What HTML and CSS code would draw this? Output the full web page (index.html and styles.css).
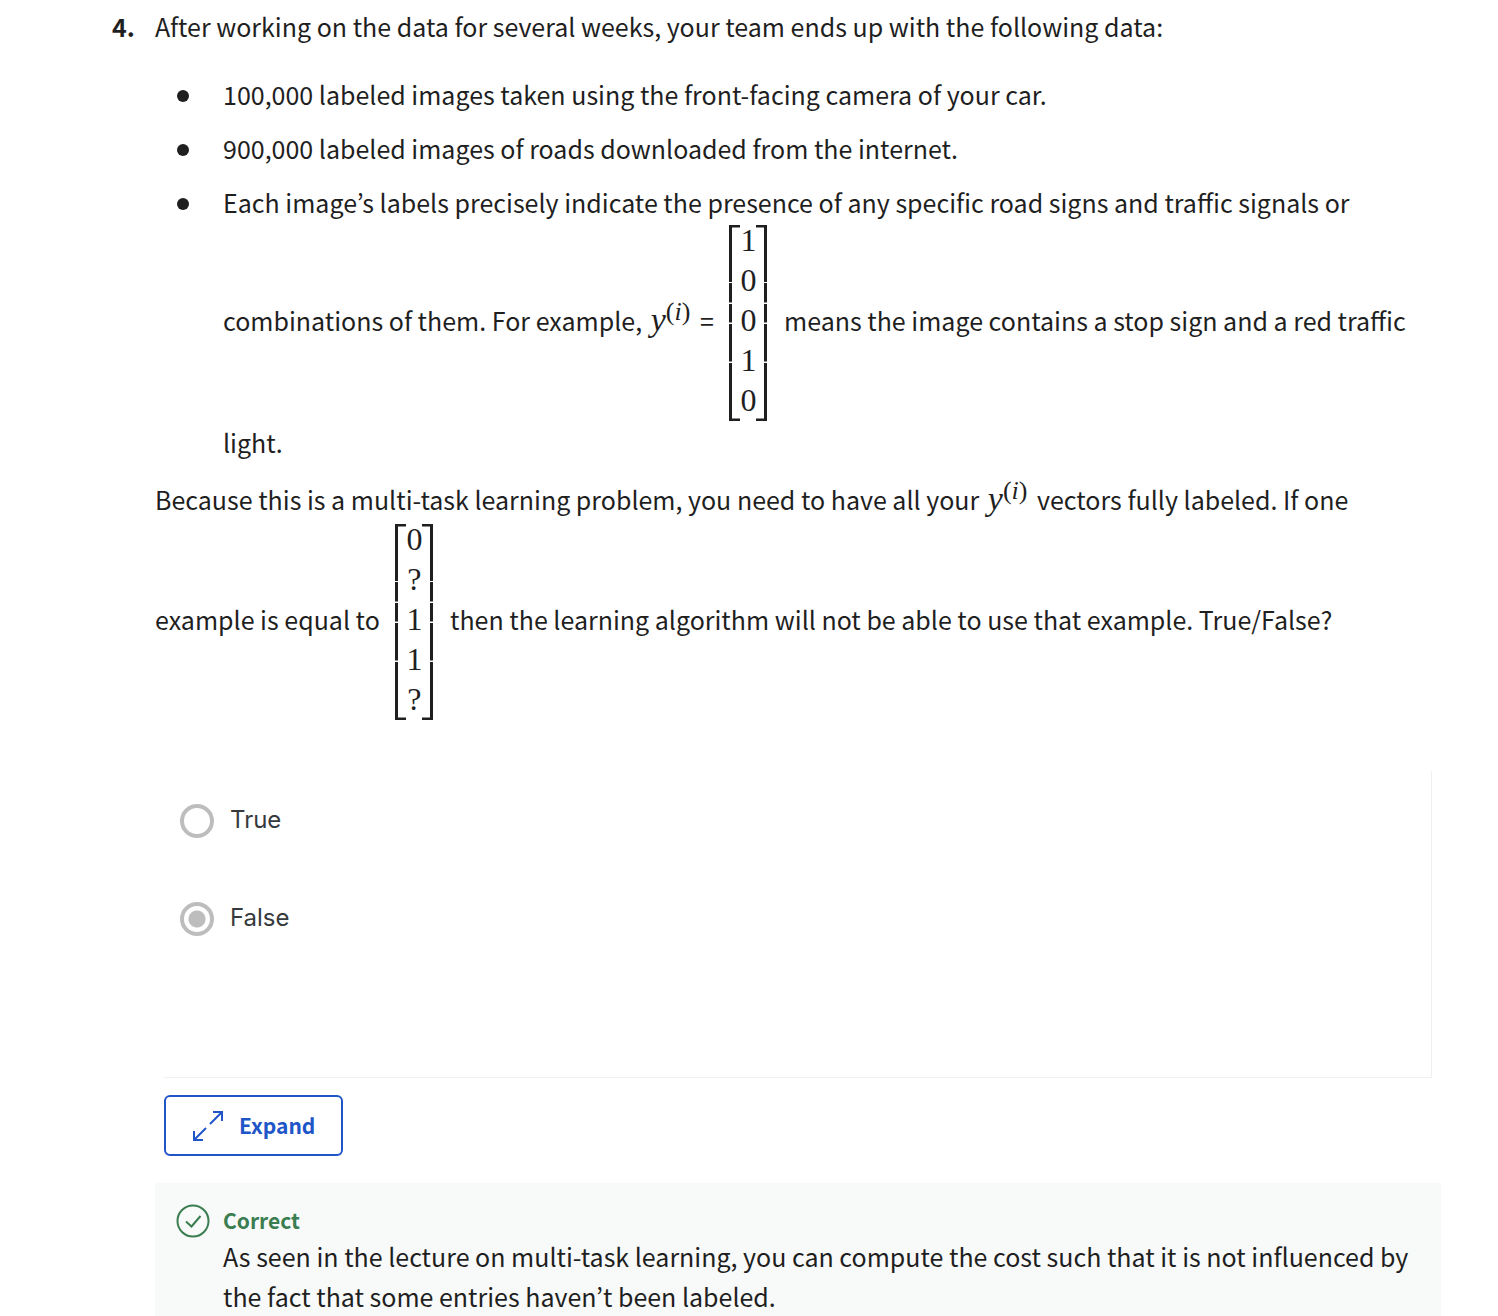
FILE: index.html
```html
<!DOCTYPE html>
<html lang="en">
<head>
<meta charset="utf-8">
<title>Quiz question 4</title>
<link rel="stylesheet" href="styles.css">
</head>
<body>
<main class="question">
  <div class="number">4.</div>
  <div class="content">
    <p class="intro">After working on the data for several weeks, your team ends up with the following data:</p>
    <ul class="facts">
      <li>100,000 labeled images taken using the front-facing camera of your car.</li>
      <li>900,000 labeled images of roads downloaded from the internet.</li>
      <li>Each image’s labels precisely indicate the presence of any specific road signs and traffic signals or combinations of them. For example, <span class="math">y<sup>(<i>i</i>)</sup></span> = <span class="matrix"><svg class="bracket" viewBox="0 0 11 196" aria-hidden="true"><path d="M11 1H1.5V57M1.5 58V77.5M1.5 79V97.5M1.5 99V136.5M1.5 138V195H11"/></svg><span class="column"><span>1</span><span>0</span><span>0</span><span>1</span><span>0</span></span><svg class="bracket" viewBox="0 0 11 196" aria-hidden="true"><path d="M0 1H9.5V57M9.5 58V77.5M9.5 79V97.5M9.5 99V136.5M9.5 138V195H0"/></svg></span> means the image contains a stop sign and a red traffic light.</li>
    </ul>
    <p class="prompt">Because this is a multi-task learning problem, you need to have all your <span class="math">y<sup>(<i>i</i>)</sup></span> vectors fully labeled. If one example is equal to <span class="matrix"><svg class="bracket" viewBox="0 0 11 196" aria-hidden="true"><path d="M11 1H1.5V57M1.5 58V77.5M1.5 79V97.5M1.5 99V136.5M1.5 138V195H11"/></svg><span class="column"><span>0</span><span>?</span><span>1</span><span>1</span><span>?</span></span><svg class="bracket" viewBox="0 0 11 196" aria-hidden="true"><path d="M0 1H9.5V57M9.5 58V77.5M9.5 79V97.5M9.5 99V136.5M9.5 138V195H0"/></svg></span> then the learning algorithm will not be able to use that example. True/False?</p>
    <div class="options" role="radiogroup" aria-label="Answer">
      <label class="option"><input type="radio" name="answer" value="true"><span>True</span></label>
      <label class="option"><input type="radio" name="answer" value="false" checked><span>False</span></label>
    </div>
    <button class="expand" type="button">
      <svg class="expand-icon" viewBox="0 0 30 30" aria-hidden="true"><path d="M17 13L29 1M20 1H29V10M13 17L1 29M1 20V29H10"/></svg>
      <span>Expand</span>
    </button>
    <section class="feedback">
      <svg class="check-icon" viewBox="0 0 34 34" aria-hidden="true"><circle cx="17" cy="17" r="15.5"/><path d="M10 17.5L15.5 22.5L24.5 12"/></svg>
      <div>
        <h2>Correct</h2>
        <p>As seen in the lecture on multi-task learning, you can compute the cost such that it is not influenced by the fact that some entries haven’t been labeled.</p>
      </div>
    </section>
  </div>
</main>
</body>
</html>
```
FILE: styles.css
```css
* { box-sizing: border-box; }
body {
  margin: 0;
  background: #fff;
  color: #1f1f1f;
  font: 25px/40px "Noto Sans CJK KR", "Noto Sans", sans-serif;
}
p, ul, h2 { margin: 0; }
.question { display: flex; padding: 6px 57px 0 112px; }
.number { flex: 0 0 43px; font-weight: 700; }
.content { flex: 1; min-width: 0; }
.facts {
  display: flex;
  flex-direction: column;
  gap: 14px;
  margin: 28px 0 15px;
  padding: 0;
  list-style: none;
}
.facts li { position: relative; padding-left: 68px; }
.facts li::before {
  content: "";
  position: absolute;
  left: 22px;
  top: 16px;
  width: 12px;
  height: 12px;
  border-radius: 50%;
  background: #1f1f1f;
}
.prompt { line-height: 44px; }
.math { margin: 0 4px 0 3px; font: italic 34px/0 "Liberation Serif", serif; }
.math sup { font-size: 26px; font-style: normal; line-height: 0; vertical-align: 11px; }
.matrix {
  display: inline-flex;
  align-items: center;
  height: 200px;
  margin: 0 11px 0 10px;
  padding-top: 2px;
  vertical-align: -90px;
  font: 32px/40px "Liberation Serif", serif;
}
.bracket { width: 11px; height: 196px; fill: none; stroke: #1f1f1f; stroke-width: 3; }
.column { display: flex; flex-direction: column; width: 16px; padding-bottom: 6px; text-align: center; }
.options {
  display: flex;
  flex-direction: column;
  gap: 58px;
  height: 307px;
  margin: 50px 9px 0;
  padding: 30px 16px;
  border: solid #f0f0f0;
  border-width: 0 1px 1px 0;
}
.option {
  display: flex;
  align-items: center;
  gap: 16px;
  color: #373a3c;
  font: 24px/38px Inter, sans-serif;
}
.option span { padding-bottom: 2px; }
.option input {
  appearance: none;
  width: 34px;
  height: 34px;
  margin: 0;
  border: 4px solid #bdbdbd;
  border-radius: 50%;
}
.option input:checked { background: radial-gradient(circle, #bdbdbd 8px, #fff 9px); }
.expand {
  display: flex;
  align-items: center;
  gap: 16px;
  height: 61px;
  margin: 17px 9px 27px;
  padding: 0 26px 0 27px;
  border: 2px solid #2055c8;
  border-radius: 6px;
  background: #fff;
  color: #2055c8;
  font: 700 21px/38px "Noto Sans CJK KR", sans-serif;
}
.expand span { padding-bottom: 2px; }
.expand-icon { width: 30px; height: 30px; fill: none; stroke: currentColor; stroke-width: 2; }
.feedback { display: flex; gap: 13px; padding: 21px 22px 0 21px; background: #f8faf9; }
.check-icon { flex: none; width: 34px; height: 34px; fill: none; stroke: #3a7d50; stroke-width: 2; }
.feedback h2 { color: #3a7d50; font-size: 21px; line-height: 32px; }
```
